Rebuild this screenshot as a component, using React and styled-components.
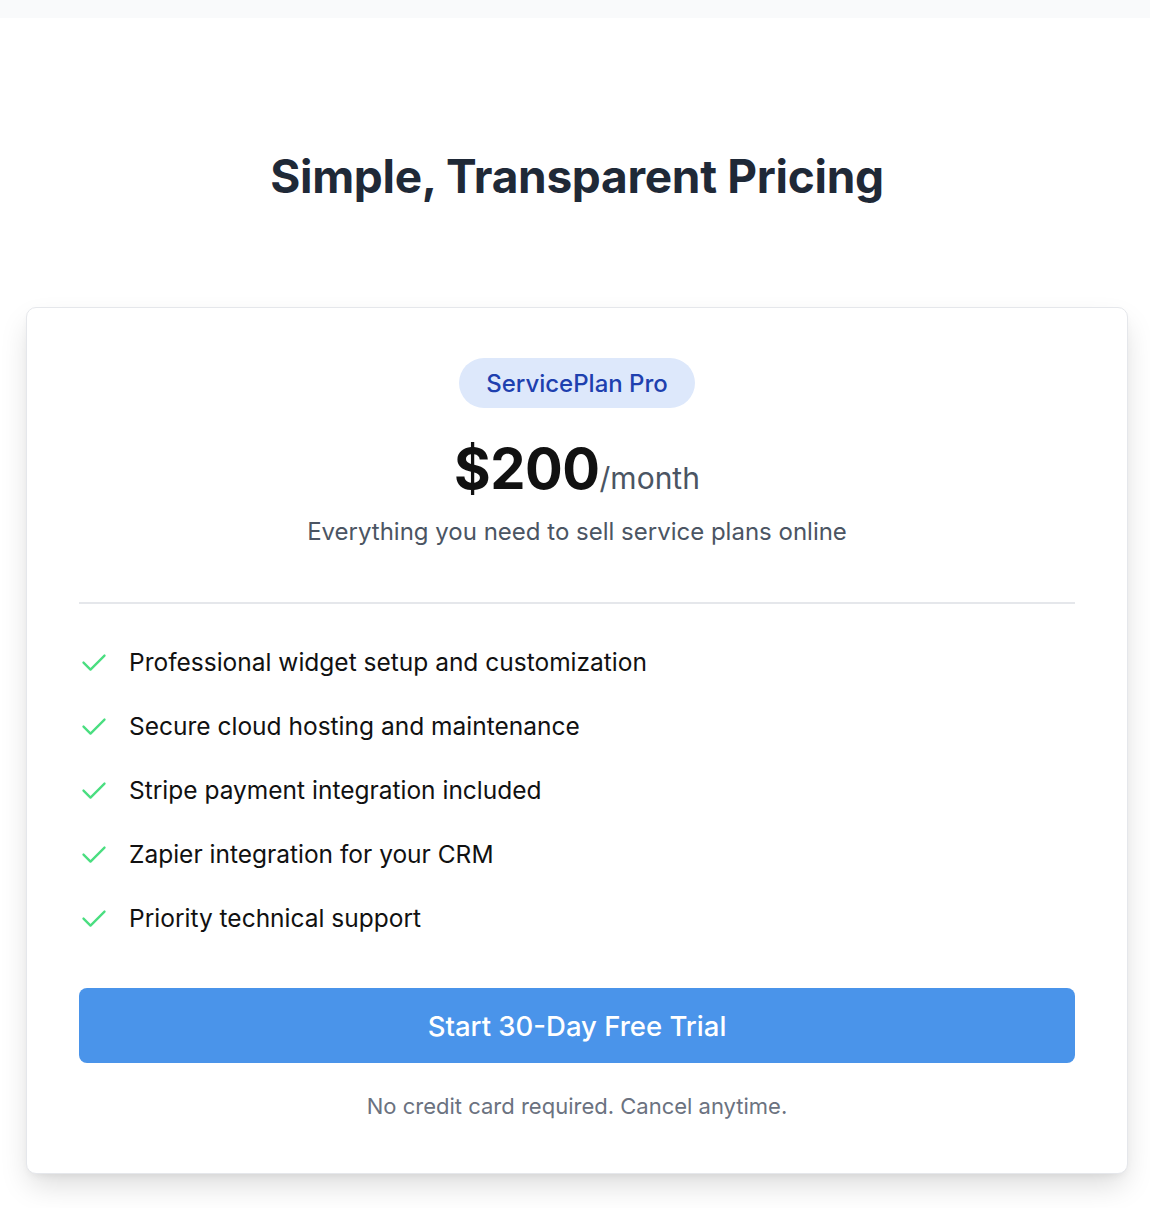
import React from 'react'
import styled, { createGlobalStyle } from 'styled-components'

const GlobalStyle = createGlobalStyle`
  html, body {
    margin: 0;
    padding: 0;
    background: #ffffff;
    font-family: Inter, "Noto Sans", sans-serif;
    -webkit-font-smoothing: antialiased;
  }
`

const TopBar = styled.div`
  height: 18px;
  background: #f9fafb;
`

const Page = styled.main`
  padding: 0 22px 40px 26px;
`

const Heading = styled.h1`
  margin: 131px 0 0;
  text-align: center;
  font-size: 46px;
  line-height: 54px;
  font-weight: 700;
  color: #1f2937;
  letter-spacing: -0.3px;
`

const Card = styled.section`
  margin-top: 104px;
  border: 1px solid #e5e7eb;
  border-radius: 10px;
  background: #fff;
  box-shadow: 0 14px 30px -4px rgba(0, 0, 0, 0.15), 0 4px 10px -4px rgba(0, 0, 0, 0.08);
  padding: 50px 52px 54px;
  display: flex;
  flex-direction: column;
  align-items: center;
`

const Badge = styled.span`
  display: inline-flex;
  align-items: center;
  height: 50px;
  padding: 0 27px;
  border-radius: 25px;
  background: #dde8fb;
  color: #1e40af;
  font-size: 24px;
  font-weight: 500;
`

const PriceRow = styled.div`
  margin-top: 26px;
  display: flex;
  align-items: baseline;
  color: #111;
`

const Amount = styled.span`
  font-size: 56px;
  line-height: 70px;
  font-weight: 700;
  letter-spacing: -0.5px;
`

const Period = styled.span`
  font-size: 30px;
  color: #4b5563;
`

const Tagline = styled.p`
  margin: 13px 0 0;
  font-size: 24px;
  color: #4b5563;
`

const Divider = styled.hr`
  align-self: stretch;
  margin: 56px 0 0;
  border: 0;
  border-top: 2px solid #e5e7eb;
`

const Features = styled.ul`
  align-self: stretch;
  list-style: none;
  margin: 40px 0 0;
  padding: 0;
  display: flex;
  flex-direction: column;
  gap: 28px;
`

const Feature = styled.li`
  display: flex;
  align-items: center;
  gap: 21px;
  font-size: 24.5px;
  line-height: 36px;
  color: #111;
`

const Check = styled.svg`
  flex: none;
  width: 28px;
  height: 28px;
  margin-left: 1px;
`

const TrialButton = styled.button`
  align-self: stretch;
  margin-top: 52px;
  height: 75px;
  border: 0;
  border-radius: 8px;
  background: #4a94ea;
  color: #fff;
  font-family: inherit;
  font-size: 27.5px;
  font-weight: 500;
  cursor: pointer;
`

const Note = styled.p`
  margin: 30px 0 0;
  font-size: 22px;
  color: #6b7280;
`

const features = [
  'Professional widget setup and customization',
  'Secure cloud hosting and maintenance',
  'Stripe payment integration included',
  'Zapier integration for your CRM',
  'Priority technical support',
]

const CheckIcon = () => (
  <Check viewBox="0 0 24 24" fill="none" stroke="#4ade80" strokeWidth="2" strokeLinecap="round" strokeLinejoin="round">
    <path d="M3 12.5l6 6L21 6.5" />
  </Check>
)

export default function App() {
  return (
    <>
      <GlobalStyle />
      <TopBar />
      <Page>
        <Heading>Simple, Transparent Pricing</Heading>
        <Card>
          <Badge>ServicePlan Pro</Badge>
          <PriceRow>
            <Amount>$200</Amount>
            <Period>/month</Period>
          </PriceRow>
          <Tagline>Everything you need to sell service plans online</Tagline>
          <Divider />
          <Features>
            {features.map((f) => (
              <Feature key={f}>
                <CheckIcon />
                {f}
              </Feature>
            ))}
          </Features>
          <TrialButton>Start 30-Day Free Trial</TrialButton>
          <Note>No credit card required. Cancel anytime.</Note>
        </Card>
      </Page>
    </>
  )
}
